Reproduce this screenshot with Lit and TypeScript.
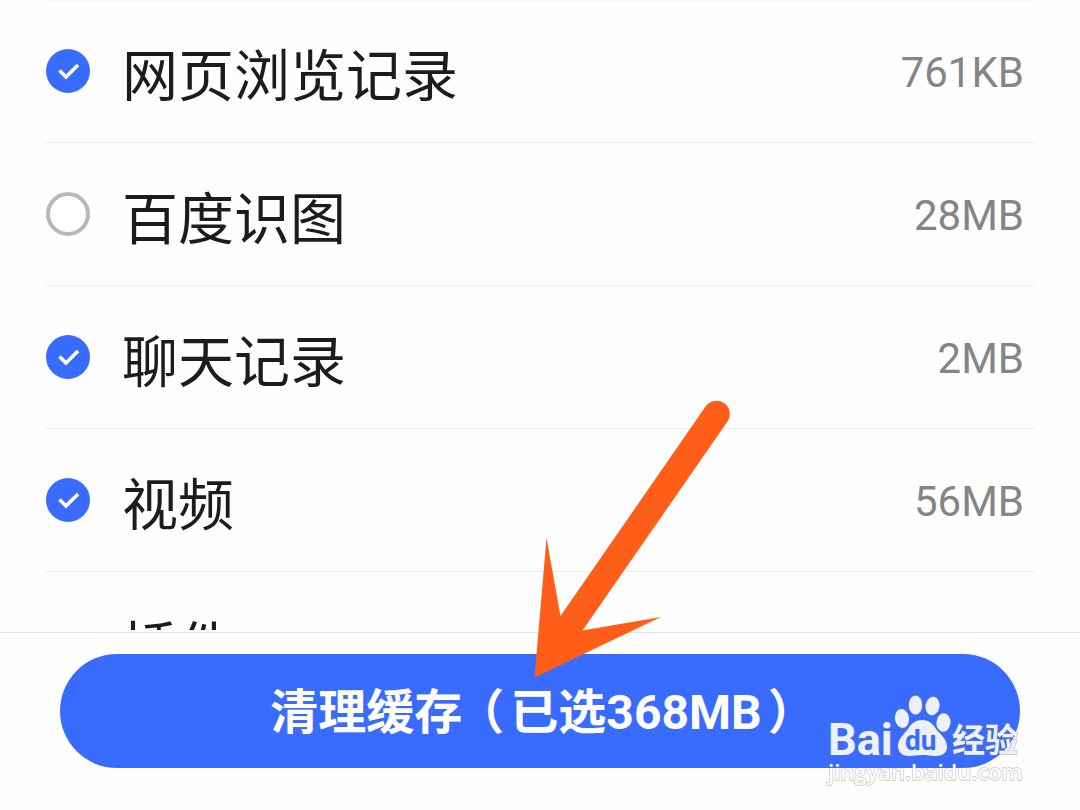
import { LitElement, html, css, svg, nothing } from "lit";
import { customElement, property, state } from "lit/decorators.js";

interface CacheItem {
  name: string;
  size: string;
  checked?: boolean;
}

@customElement("cache-row")
class CacheRow extends LitElement {
  @property({ attribute: false }) item!: CacheItem;

  static styles = css`
    :host {
      display: block;
    }
    .row {
      box-sizing: border-box;
      height: 143px;
      border-bottom: 1px solid #ececec;
      padding: 0 11px 0 1px;
      display: grid;
      grid-template-columns: 44px 1fr auto;
      column-gap: 32px;
      align-items: center;
    }
    .mark {
      display: grid;
      width: 44px;
      height: 44px;
    }
    .box,
    .tick {
      grid-area: 1 / 1;
      width: 44px;
      height: 44px;
      margin: 0;
    }
    .box {
      appearance: none;
      box-sizing: border-box;
      border: 4px solid #b8b8b8;
      border-radius: 50%;
      background: #fff;
    }
    .box:checked {
      border: none;
      background: #3a6bff;
    }
    .tick {
      pointer-events: none;
      fill: none;
      stroke: #fff;
      stroke-width: 3.6;
    }
    .box:not(:checked) + .tick {
      visibility: hidden;
    }
    .name {
      padding-top: 12px;
      font-size: 56px;
      line-height: 80px;
      color: #1c1c1c;
    }
    .size {
      padding-top: 4px;
      font-size: 42px;
      line-height: 56px;
      color: #858585;
    }
  `;

  render() {
    const { name, size, checked } = this.item;
    return html`
      <label class="row">
        <span class="mark">
          ${checked === undefined
            ? nothing
            : html`<input class="box" type="checkbox" .checked=${checked} />
                <svg class="tick" viewBox="0 0 44 44" aria-hidden="true">
                  <path d="M13.5 21.5 L20 28 L32 16" />
                </svg>`}
        </span>
        <span class="name">${name}</span>
        <span class="size">${size}</span>
      </label>
    `;
  }
}

@customElement("app-root")
class AppRoot extends LitElement {
  @state() private items: CacheItem[] = [
    { name: "网页浏览记录", size: "761KB", checked: true },
    { name: "百度识图", size: "28MB", checked: false },
    { name: "聊天记录", size: "2MB", checked: true },
    { name: "视频", size: "56MB", checked: true },
    { name: "插件", size: "" },
  ];

  static styles = css`
    :host {
      display: flex;
      flex-direction: column;
      position: relative;
      height: 100vh;
      overflow: hidden;
      background: #fefefe;
      font-family: Roboto, "Noto Sans CJK SC", sans-serif;
    }
    .list {
      flex: 1;
      min-height: 0;
      overflow: hidden;
      padding: 0 45px;
      margin-bottom: 2px;
    }
    .list cache-row:first-of-type {
      box-shadow: inset 0 1px #f6f6f6;
    }
    .footer {
      border-top: 1px solid #e4e4e4;
      padding: 21px 60px 42px;
    }
    .clean {
      display: block;
      width: 100%;
      height: 114px;
      padding: 4px 0 0;
      border: none;
      border-radius: 57px;
      background: #3a6bff;
      color: #fff;
      font-family: inherit;
      font-size: 48px;
      font-weight: 700;
      line-height: 64px;
    }
    .paren {
      font-feature-settings: "halt";
    }
    .open {
      margin: 0 6px 0 18px;
    }
    .close {
      margin: 0 18px 0 6px;
    }
    .arrow {
      position: absolute;
      left: 534px;
      top: 400px;
      width: 198px;
      height: 280px;
      fill: #ff5e19;
      pointer-events: none;
    }
    .logo {
      position: absolute;
      right: 50px;
      bottom: 20px;
      width: 210px;
      height: 100px;
      pointer-events: none;
    }
    .ink {
      fill: #edf1ff;
      stroke: #777;
      stroke-opacity: 0.45;
      stroke-width: 1.4;
      paint-order: stroke;
    }
    .bai {
      font: 700 45px Roboto, sans-serif;
    }
    .du {
      font: 700 28px Roboto, sans-serif;
      fill: #3a6bff;
    }
    .cn {
      font: 700 33px "Noto Sans CJK SC", sans-serif;
    }
    .url {
      font: 600 22px "Open Sans", sans-serif;
      fill: #fff;
    }
  `;

  render() {
    return html`
      <main class="list">
        ${this.items.map((i) => html`<cache-row .item=${i}></cache-row>`)}
      </main>
      <footer class="footer">
        <button class="clean" type="button">清理缓存<span class="paren open">（</span>已选368MB<span class="paren close">）</span></button>
      </footer>
      <svg class="arrow" viewBox="534 400 198 280" aria-hidden="true">
        <path
          d="M534.5 677.5 L546.5 538 L560.5 616 L705.5 406.5 A13.2 13.2 0 0 1 727.5 421.5 L582.5 630.5 L661 617 Z"
        />
      </svg>
      <svg class="logo" viewBox="820 690 210 100" aria-hidden="true">
        ${svg`
          <text class="ink bai" x="828" y="755">Bai</text>
          <g class="ink">
            <ellipse cx="902" cy="718.5" rx="7" ry="9.5" transform="rotate(-8 902 718.5)" />
            <ellipse cx="915.5" cy="705" rx="6.7" ry="9.5" />
            <ellipse cx="932.5" cy="706" rx="7" ry="9.3" transform="rotate(10 932.5 706)" />
            <ellipse cx="943.5" cy="722.5" rx="7" ry="9.2" transform="rotate(5 943.5 722.5)" />
            <path d="M922 720 C929 720 933 724 936 729 C940 734 947 739 947 747 C947 753 942 756 936 756 C930 756 927 755 922 755 C917 755 914 756 909 756 C902 756 898 752 898 746 C898 739 904 734 908 729 C911 724 915 720 922 720 Z" />
          </g>
          <text class="du" x="905" y="750">du</text>
          <text class="ink cn" x="952" y="752">经验</text>
          <text class="ink url" x="828" y="780">jingyan.baidu.com</text>
        `}
      </svg>
    `;
  }
}
